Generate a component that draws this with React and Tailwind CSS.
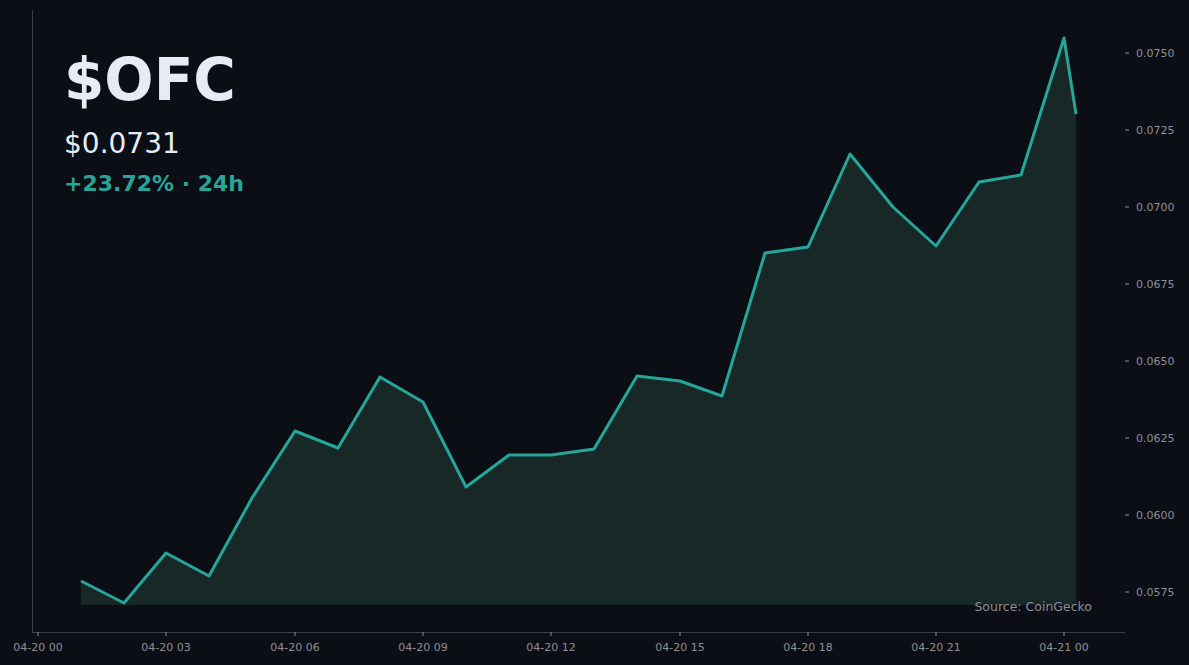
export default function App() {
  const pts = [[81,581],[124,603],[166,553],[209,576],[252,498],[295,431],[338,448],[380,377],[423,402],[466,487],[509,455],[551,455],[594,449],[637,376],[680,381],[722,396],[765,253],[808,247],[850,154],[893,207],[936,246],[979,182],[1021,175],[1064,38],[1076,114]];
  const line = pts.map((p,i)=>(i?"L":"M")+p[0]+" "+p[1]).join(" ");
  const area = line + " L1076 605 L81 605 Z";
  const yt = [["0.0750",53],["0.0725",130],["0.0700",207],["0.0675",284],["0.0650",361],["0.0625",438],["0.0600",515],["0.0575",592]];
  const xt = [["04-20 00",38],["04-20 03",166],["04-20 06",295],["04-20 09",423],["04-20 12",551],["04-20 15",680],["04-20 18",808],["04-20 21",936],["04-21 00",1064]];
  return (
    <div className="relative w-[1189px] h-[665px] bg-[#0b0e15] overflow-hidden" style={{fontFamily:'"DejaVu Sans", sans-serif'}}>
      <svg width="1189" height="665" className="absolute inset-0" style={{fontFamily:'"DejaVu Sans", sans-serif'}}>
        <path d={area} fill="#172827" />
        <path d={line} fill="none" stroke="#26a69a" strokeWidth="3" strokeLinejoin="round" />
        <line x1="32.5" y1="10" x2="32.5" y2="632" stroke="#3a3d44" />
        <line x1="32" y1="632.5" x2="1125" y2="632.5" stroke="#3a3d44" />
        {yt.map(([t,y])=>(
          <g key={t}>
            <line x1="1125" x2="1129" y1={y} y2={y} stroke="#8b8f97" />
            <text x="1136" y={y+4} fill="#8b8f97" fontSize="11">{t}</text>
          </g>
        ))}
        {xt.map(([t,x])=>(
          <g key={t}>
            <line x1={x} x2={x} y1="632" y2="636" stroke="#8b8f97" />
            <text x={x} y="651" fill="#8b8f97" fontSize="11" textAnchor="middle">{t}</text>
          </g>
        ))}
        <text x="1092" y="611" fill="#8b8f97" fontSize="12.5" textAnchor="end">Source: CoinGecko</text>
      </svg>
      <div className="absolute left-[64px] top-[44px] flex flex-col">
        <div className="text-[58px] font-bold leading-[72px] text-[#e6ecf5]">$OFC</div>
        <div className="text-[28px] leading-[36px] mt-[10px] text-[#e6ecf5]">$0.0731</div>
        <div className="text-[22px] leading-[28px] mt-[8px] font-bold text-[#26a69a]">+23.72% · 24h</div>
      </div>
    </div>
  );
}
